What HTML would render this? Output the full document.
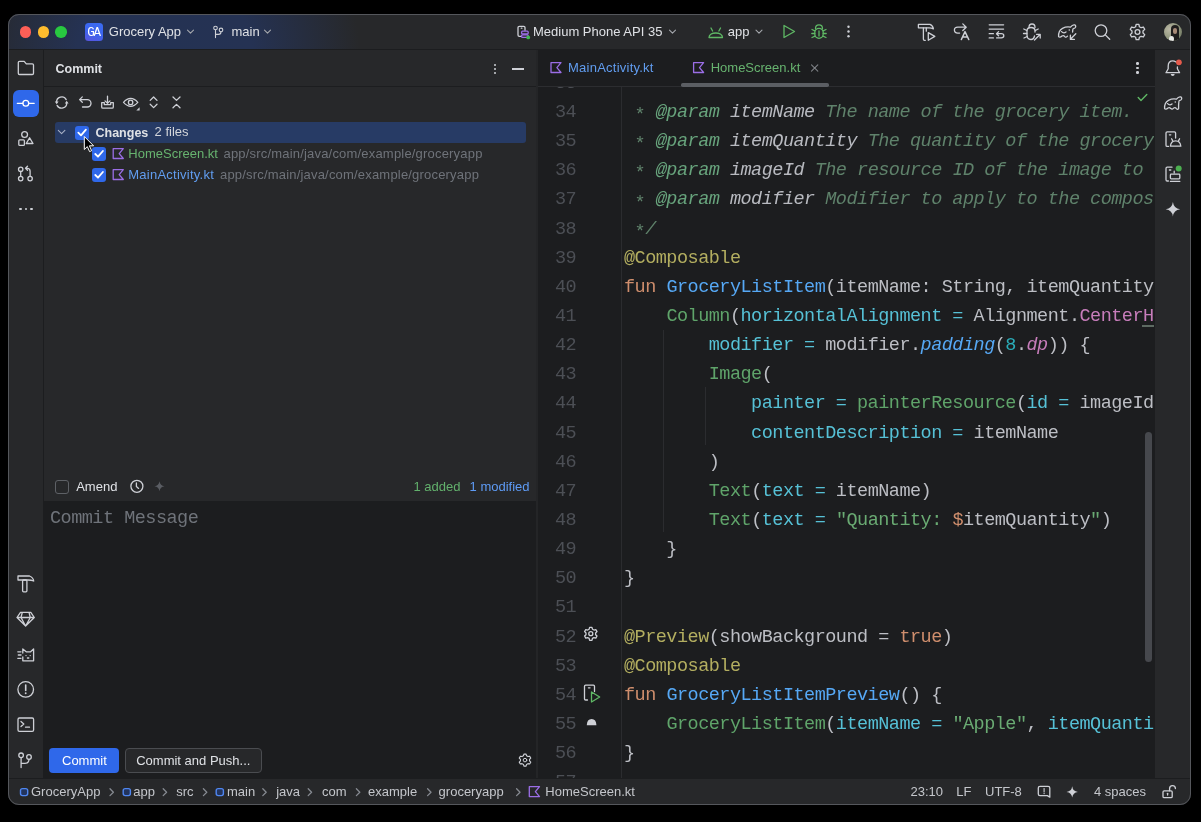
<!DOCTYPE html>
<html><head><meta charset="utf-8">
<style>
*{margin:0;padding:0;box-sizing:border-box}
html,body{width:1201px;height:822px;background:#000;overflow:hidden}
body{font-family:"Liberation Sans",sans-serif;font-size:13px;color:#dfe1e5;position:relative}
.a{position:absolute}
#win{position:absolute;left:8px;top:14px;width:1183px;height:791px;border-radius:11px;overflow:hidden;background:#27282a}
#pg{position:absolute;left:-8px;top:-14px;width:1201px;height:822px;will-change:transform}
#border{position:absolute;left:8px;top:14px;width:1183px;height:791px;border-radius:11px;border:1px solid #55575c;pointer-events:none}
.t{position:absolute;white-space:pre;line-height:16px}
.b{font-weight:bold}
.m{font-family:"Liberation Mono",monospace}
svg.i{position:absolute;overflow:visible}
svg.i *{fill:none;stroke:#ced0d6;stroke-width:1.3;stroke-linecap:round;stroke-linejoin:round}
svg.i .f{fill:#ced0d6;stroke:none}
svg.i .g{stroke:#5fb865}
svg.i .d{stroke:#868a91}
svg.i .p{stroke:#9b6ee6}
.chk{position:absolute;width:14px;height:14px;border-radius:3px;background:#2f68ea}
.code{position:absolute;left:624px;top:0;font-family:"Liberation Mono",monospace;font-size:18.5px;letter-spacing:-0.51px;line-height:29.145px;white-space:pre;color:#bcbec4}
.ln{position:absolute;left:540px;width:38px;text-align:right;font-family:"Liberation Mono",monospace;font-size:18.5px;letter-spacing:-0.51px;line-height:29.145px;color:#4c4f55;white-space:pre}
.k{color:#cf8e6d}.fd{color:#56a8f5}.an{color:#b3ae60}.s{color:#6aab73}.n{color:#2aacb8}.na{color:#56c1d6}.cf{color:#5fa46a}.pu{color:#c77dbb}
.c{color:#5f826b;font-style:italic}.tg{color:#67a37c;font-style:italic}.tv{color:#b8bac0;font-style:italic}.it{font-style:italic}
</style></head>
<body>
<div id="win"><div id="pg">
  <!-- TITLE BAR -->
  <div class="a" style="left:0;top:14px;width:1201px;height:35px;background:radial-gradient(ellipse 195px 170px at 165px 40px,#243253 0%,#253253 45%,rgba(39,40,42,0) 100%),#27282a"></div>
  <div class="a" style="left:0;top:49px;width:1201px;height:1px;background:#1c1d1f"></div>
  <div class="a" style="left:19.85px;top:26px;width:11.5px;height:11.5px;border-radius:50%;background:#fe5f57"></div>
  <div class="a" style="left:37.65px;top:26px;width:11.5px;height:11.5px;border-radius:50%;background:#febc2e"></div>
  <div class="a" style="left:55.45px;top:26px;width:11.5px;height:11.5px;border-radius:50%;background:#28c840"></div>

  <!-- LEFT STRIP -->
  <div class="a" style="left:0;top:50px;width:43px;height:728px;background:#27282a"></div>
  <div class="a" style="left:43px;top:50px;width:1px;height:728px;background:#1c1d1f"></div>

  <!-- COMMIT PANEL -->
  <div class="a" style="left:44px;top:50px;width:492px;height:451px;background:#27282a"></div>
  <div class="a" style="left:44px;top:86px;width:492px;height:1px;background:#1c1d1f"></div>
  <div class="a" style="left:44px;top:501px;width:492px;height:277px;background:#1c1d1f"></div>
  <div class="a" style="left:536px;top:50px;width:2px;height:728px;background:#242527"></div>

  <!-- EDITOR -->
  <div class="a" style="left:538px;top:50px;width:617px;height:728px;background:#1c1d1f"></div>
  <div class="a" style="left:538px;top:85.5px;width:617px;height:1px;background:#2c2d30"></div>

  <!-- RIGHT STRIP -->
  <div class="a" style="left:1155px;top:50px;width:46px;height:728px;background:#27282a"></div>

  <!-- STATUS BAR -->
  <div class="a" style="left:0;top:778px;width:1201px;height:1px;background:#1c1d1f"></div>
  <div class="a" style="left:0;top:779px;width:1201px;height:30px;background:#27282a"></div>
  <!-- title content -->
  <div class="a" style="left:85.3px;top:22.9px;width:18px;height:18px;border-radius:3.5px;background:linear-gradient(200deg,#3a6cf2 0%,#3d64ee 55%,#5a55de 100%)"></div>
  <div class="t m" style="left:85px;top:25.4px;width:17px;text-align:center;font-size:12.5px;letter-spacing:-1.2px;color:#fff">GA</div>
  <div class="t" style="left:108.8px;top:23.8px;color:#dfe1e5">Grocery App</div>
  <svg class="i" style="left:0;top:0" width="1" height="1"><path d="M187.5 30.2 L190.5 33.2 L193.5 30.2" style="stroke:#a4a7ac;stroke-width:1.1"/></svg>
  <svg class="i" style="left:0;top:0" width="1" height="1">
    <circle cx="215.5" cy="28" r="1.8" style="stroke-width:1.1"/><circle cx="221" cy="29.9" r="1.8" style="stroke-width:1.1"/>
    <path d="M215.5 29.8 V37.6 M221 31.7 Q221 34.4 218.5 34.4 H215.5" style="stroke-width:1.1"/>
  </svg>
  <div class="t" style="left:231.5px;top:23.8px">main</div>
  <svg class="i" style="left:0;top:0" width="1" height="1"><path d="M264.5 30.2 L267.5 33.2 L270.5 30.2" style="stroke:#a4a7ac;stroke-width:1.1"/></svg>

  <!-- device -->
  <svg class="i" style="left:0;top:0" width="1" height="1">
    <path d="M521 36.3 H519.3 Q518 36.3 518 35 V27.6 Q518 26.3 519.3 26.3 H523.8 Q525 26.3 525 27.6 V30.3" />
    <path d="M521.3 28.2 h0.6" />
    <rect x="521.6" y="31.2" width="6.6" height="2.8" rx="1" class="p"/>
    <rect x="521.6" y="34.8" width="6.6" height="2.6" rx="1" class="p"/>
    <circle class="f" cx="528.2" cy="37.4" r="1.9" style="fill:#3fb950"/>
  </svg>
  <div class="t" style="left:533px;top:23.6px">Medium Phone API 35</div>
  <svg class="i" style="left:0;top:0" width="1" height="1"><path d="M669.5 30.2 L672.5 33.2 L675.5 30.2" style="stroke:#a4a7ac;stroke-width:1.1"/></svg>
  <!-- android -->
  <svg class="i" style="left:0;top:0" width="1" height="1" >
    <path class="g" d="M709 37.5 C709 31.5 722.5 31.5 722.5 37.5 Z M711 28 L712.6 31 M720.5 28 L718.9 31"/>
  </svg>
  <div class="t" style="left:727.8px;top:23.6px">app</div>
  <svg class="i" style="left:0;top:0" width="1" height="1"><path d="M756 30.2 L759 33.2 L762 30.2" style="stroke:#a4a7ac;stroke-width:1.1"/></svg>
  <!-- run -->
  <svg class="i" style="left:0;top:0" width="1" height="1"><path class="g" style="stroke-width:1.3" d="M784 25.5 L794.5 31.5 L784 37.5 Z"/></svg>
  <!-- debug -->
  <svg class="i" style="left:0;top:0" width="1" height="1">
    <g>
    <path class="g" d="M815.5 28.5 Q815.5 24.8 819 24.8 Q822.5 24.8 822.5 28.5"/>
    <rect class="g" x="814.8" y="28.3" width="8.4" height="10" rx="4.2"/>
    <path class="g" d="M812 29.5 L814.8 30.8 M826 29.5 L823.2 30.8 M811.8 33.5 H814.8 M826.2 33.5 H823.2 M812 37.5 L815 36.2 M826 37.5 L823 36.2 M819 31 V36"/>
    </g>
  </svg>
  <!-- kebab -->
  <svg class="i" style="left:0;top:0" width="1" height="1">
    <circle class="f" cx="848.5" cy="26.8" r="1.2"/><circle class="f" cx="848.5" cy="31.5" r="1.2"/><circle class="f" cx="848.5" cy="36.2" r="1.2"/>
  </svg>

  <!-- right toolbar icons -->
  <svg class="i" style="left:0;top:0" width="1" height="1">
    <!-- hammer+play -->
    <path d="M918.4 24.4 H930 Q932.9 25.6 933.4 28.9 Q931.6 27.8 929 27.8 H918.4 Z"/>
    <path d="M923.4 28 V39.2 Q923.4 40.3 924.5 40.3 H925.3 M926.3 28 V31.2"/>
    <path d="M928.3 32.6 L934.8 36.4 L928.3 40.2 Z"/>
    <!-- translate -->
    <path d="M959.6 33.1 H957.8 Q954.4 33.1 954.4 30.1 Q954.4 27.2 957.8 27.2 H966.2 M962.8 23.9 L966.2 27.2 L962.8 30.5"/>
    <path d="M961.3 39.6 L965 31.6 L968.8 39.6 M962.6 37 H967.5" style="stroke-width:1.45"/>
    <!-- list -->
    <path d="M989.2 24.8 H1003.6 M989.2 29.1 H1003.6 M989.2 33.7 H993.4 M989.2 37.9 H993.4"/>
    <path d="M996.6 37.9 H1001.3 Q1003.8 37.9 1003.8 35.8 Q1003.8 33.7 1001.3 33.7 H996.6 M998.6 31.6 L996.5 33.7 L998.6 35.8"/>
    <!-- bug arrow -->
    <path d="M1029 27.5 Q1029 24 1032 24 Q1035 24 1035 27.5"/>
    <path d="M1034.5 36 Q1033.8 39.5 1031 39.5 Q1027 39.5 1027 35 V30.8 Q1027 27.5 1031 27.5 Q1035 27.5 1035 30.8 V32"/>
    <path d="M1023.8 29 L1026.8 30.5 M1023.5 33.5 H1026.8 M1024 38 L1027.2 36.5 M1038.2 29 L1035.3 30.5"/>
    <path d="M1034.5 40 L1040 34.5 M1036.5 34.3 H1040.2 V38"/>
    <!-- elephant -->
    <path d="M1058.6 36.6 Q1058.2 30.5 1062.5 28.3 Q1066.5 26.3 1070.5 27.2 Q1072.6 24.4 1074.6 24.9 Q1076.3 25.6 1075.4 27.5 Q1074.9 28.4 1073.8 28.3 M1073 29 Q1072.6 30.5 1072.6 32 M1058.6 36.6 Q1060 38 1062 36 Q1063.6 35 1064.8 36.6 Q1066 38 1067.5 36.2"/>
    <path d="M1061.6 31.6 Q1063.6 33.8 1066 32"/>
    <circle class="f" cx="1069.3" cy="30" r="0.8"/>
    <path d="M1075.8 33.8 L1070.4 39.2 M1070.4 35.2 V39.4 H1074.4"/>
    <!-- search -->
    <circle cx="1101" cy="30.6" r="5.8"/>
    <path d="M1105.3 34.9 L1109.7 39.3"/>
    <!-- gear -->
    <path d="M1136.14 24.42 L1138.86 24.42 L1139.40 26.73 L1141.11 27.72 L1143.38 27.03 L1144.74 29.39 L1143.01 31.01 L1143.01 32.99 L1144.74 34.61 L1143.38 36.97 L1141.11 36.28 L1139.40 37.27 L1138.86 39.58 L1136.14 39.58 L1135.60 37.27 L1133.89 36.28 L1131.62 36.97 L1130.26 34.61 L1131.99 32.99 L1131.99 31.01 L1130.26 29.39 L1131.62 27.03 L1133.89 27.72 L1135.60 26.73 Z"/>
    <circle cx="1137.5" cy="32" r="2.4"/>
  </svg>
  <!-- avatar -->
  <div class="a" style="left:1163.5px;top:22.8px;width:18.5px;height:18.5px;border-radius:50%;overflow:hidden;background:radial-gradient(circle at 30% 35%,#b9b7a4,#8f957c 55%,#5d6552)">
    <div class="a" style="left:7px;top:2px;width:8px;height:17px;border-radius:4px 4px 1px 1px;background:#1f1d1c"></div>
    <div class="a" style="left:9.5px;top:5px;width:4px;height:6px;border-radius:2px;background:#a88a76"></div>
    <div class="a" style="left:5px;top:13px;width:5px;height:6px;border-radius:50%;background:#e9e9e6"></div>
  </div>
  <!-- left strip icons -->
  <div class="a" style="left:12.5px;top:90px;width:26.5px;height:26.5px;border-radius:6px;background:#2f68ea"></div>
  <svg class="i" style="left:0;top:0" width="1" height="1">
    <!-- folder -->
    <path d="M18.3 62.5 Q18.3 61.3 19.5 61.3 H24.2 L26.3 63.8 H32.3 Q33.5 63.8 33.5 65 V73.3 Q33.5 74.5 32.3 74.5 H19.5 Q18.3 74.5 18.3 73.3 Z"/>
    <!-- commit -->
    <path d="M17.3 103.3 H22.8 M28.8 103.3 H34.2" style="stroke:#fff;stroke-width:1.3"/>
    <circle cx="25.8" cy="103.3" r="2.9" style="stroke:#fff;stroke-width:1.3"/>
    <!-- structure -->
    <circle cx="24.6" cy="134.5" r="2.9"/>
    <rect x="18.8" y="139.8" width="5.6" height="5.6" rx="1"/>
    <path d="M29.6 137.8 L33 143.5 H26.2 Z"/>
    <!-- PR -->
    <circle cx="20.7" cy="169.3" r="2.2"/><circle cx="20.7" cy="178.6" r="2.2"/><circle cx="30.1" cy="178.6" r="2.2"/>
    <path d="M20.7 171.5 V176.4 M30.1 176.4 V171.2 Q30.1 168.3 27.3 168.3 H25.8 M27.5 166.3 L25.5 168.3 L27.5 170.3"/>
    <!-- hammer -->
    <path d="M18 576 H29.5 Q33.2 577.5 33.7 581 Q31.5 580 28 580 H18 Z"/>
    <rect x="22.6" y="580" width="4.3" height="11.8" rx="1"/>
    <!-- gem -->
    <path d="M20.5 612.4 H30.8 L34.3 617.5 L25.6 626 L17 617.5 Z M17 617.5 H34.3 M22.3 612.4 L21 617.5 L25.6 626 L30.3 617.5 L29 612.4"/>
    <!-- cat -->
    <path d="M22.8 653 V649 L26.2 651.8 H30.6 L33.6 649 V660.8 H22.8 V657"/>
    <path d="M17.8 651.8 H21 M18.3 655 H21 M17.8 658.3 H21"/>
    <circle class="f" cx="26" cy="655.6" r="0.7"/><circle class="f" cx="30.2" cy="655.6" r="0.7"/><path d="M27.4 658 H28.8"/>
    <!-- exclamation -->
    <circle cx="25.7" cy="689.4" r="7.8"/>
    <path d="M25.7 685 V690.5" style="stroke-width:1.6"/>
    <circle class="f" cx="25.7" cy="693.3" r="0.95"/>
    <!-- terminal -->
    <rect x="18" y="718" width="15.6" height="13.4" rx="1.4"/>
    <path d="M21 721.5 L23.8 724 L21 726.5 M25.5 727.2 H29.5"/>
    <!-- git -->
    <circle cx="21.1" cy="755.3" r="2.3"/><circle cx="29" cy="757" r="2.3"/>
    <path d="M21.1 757.6 V767.6 M29 759.3 Q29 763.3 25 763.3 H21.1"/>
  </svg>
  <div class="a" style="left:19px;top:207.8px;width:2.6px;height:2.6px;border-radius:50%;background:#ced0d6"></div>
  <div class="a" style="left:24.6px;top:207.8px;width:2.6px;height:2.6px;border-radius:50%;background:#ced0d6"></div>
  <div class="a" style="left:30.2px;top:207.8px;width:2.6px;height:2.6px;border-radius:50%;background:#ced0d6"></div>
  <!-- commit header -->
  <div class="t b" style="left:55.5px;top:60.8px;font-size:12.5px;color:#dfe1e5">Commit</div>
  <div class="a" style="left:494px;top:63.5px;width:2px;height:2px;background:#ced0d6;border-radius:1px"></div>
  <div class="a" style="left:494px;top:68px;width:2px;height:2px;background:#ced0d6;border-radius:1px"></div>
  <div class="a" style="left:494px;top:72.3px;width:2px;height:2px;background:#ced0d6;border-radius:1px"></div>
  <div class="a" style="left:512.2px;top:68.2px;width:11.6px;height:1.5px;background:#ced0d6"></div>
  <svg class="i" style="left:0;top:0" width="1" height="1">
    <!-- refresh -->
    <path d="M56.6 102.3 A5.1 5.1 0 0 1 66.2 99.6 M66.7 102.7 A5.1 5.1 0 0 1 57.1 105.4"/>
    <path class="f" d="M54.8 101.6 H58.6 L56.7 104.2 Z M64.8 103.4 H68.6 L66.7 100.8 Z"/>
    <!-- undo -->
    <path d="M79.8 99.6 H87.3 A3.7 3.7 0 0 1 87.3 107 H82.5 M82.3 96.9 L79.6 99.6 L82.3 102.3"/>
    <!-- download -->
    <path d="M107.5 96.2 V103.3 M105 100.9 L107.5 103.4 L110 100.9"/>
    <path d="M101.7 102.6 H104.3 V104.6 H110.7 V102.6 H113.3 V107 Q113.3 108.2 112.1 108.2 H102.9 Q101.7 108.2 101.7 107 Z"/>
    <!-- eye -->
    <path d="M123.5 102.4 Q130.7 94.5 137.8 102.4 Q130.7 110.3 123.5 102.4 Z"/>
    <circle cx="130.6" cy="102.4" r="2.2"/>
    <path class="f" d="M139.6 107.3 V110.6 H136.3 Z"/>
    <!-- expand -->
    <path d="M150.2 100.4 L153.6 97 L157 100.4 M150.2 104.2 L153.6 107.6 L157 104.2"/>
    <!-- collapse -->
    <path d="M173 97 L176.5 100.4 L180 97 M173 107.8 L176.5 104.4 L180 107.8"/>
  </svg>

  <!-- tree -->
  <div class="a" style="left:55px;top:122px;width:471px;height:20.5px;border-radius:3px;background:#273b65"></div>
  <svg class="i" style="left:0;top:0" width="1" height="1"><path d="M58.3 130.4 L61.6 133.7 L64.9 130.4" style="stroke:#a9b1c6;stroke-width:1.05"/></svg>
  <div class="chk" style="left:75px;top:125.5px"></div>
  <div class="t b" style="left:95.5px;top:124.6px;font-size:12.5px">Changes</div>
  <div class="t" style="left:154.6px;top:124.4px;color:#d3d5da">2 files</div>

  <div class="chk" style="left:92px;top:147px"></div>
  <div class="chk" style="left:92px;top:168px"></div>
  <svg class="i" style="left:0;top:0" width="1" height="1">
    <path d="M78.3 132.6 L81 135.3 L85.9 129.6" style="stroke:#fff;stroke-width:1.8"/>
    <path d="M95.3 154 L98 156.7 L102.9 151" style="stroke:#fff;stroke-width:1.8"/>
    <path d="M95.3 175 L98 177.7 L102.9 172" style="stroke:#fff;stroke-width:1.8"/>
  </svg>
  <svg class="i" style="left:0;top:0" width="1" height="1">
    <path class="p" d="M113.2 148.7 H123.3 L119.2 153.6 L123.3 158.5 H113.2 Z"/>
    <path class="p" d="M113.2 169.7 H123.3 L119.2 174.6 L123.3 179.5 H113.2 Z"/>
  </svg>
  <div class="t" style="left:128.3px;top:145.8px;color:#67b36f">HomeScreen.kt</div>
  <div class="t" style="left:223.5px;top:145.8px;color:#6f737a;letter-spacing:0.19px">app/src/main/java/com/example/groceryapp</div>
  <div class="t" style="left:128.3px;top:166.8px;color:#619df0;letter-spacing:0.24px">MainActivity.kt</div>
  <div class="t" style="left:220px;top:166.8px;color:#6f737a;letter-spacing:0.19px">app/src/main/java/com/example/groceryapp</div>

  <!-- cursor -->
  <svg class="a" style="left:0;top:0;overflow:visible" width="1" height="1">
    <path d="M84.3 136.5 V149.5 L87.3 146.6 L89.6 151.6 L91.6 150.7 L89.4 145.8 H93.6 Z" fill="#000" stroke="#fff" stroke-width="1" stroke-linejoin="round"/>
  </svg>

  <!-- amend row -->
  <div class="a" style="left:55px;top:479.5px;width:14px;height:14px;border-radius:3px;border:1px solid #5e6166"></div>
  <div class="t" style="left:76.2px;top:478.6px">Amend</div>
  <svg class="i" style="left:0;top:0" width="1" height="1">
    <circle cx="136.9" cy="486.3" r="6"/>
    <path d="M136.4 483 V486.5 L138.6 488.4"/>
    <path class="f" style="fill:#5a5d63" d="M159.5 481.3 Q160.2 485.6 164.5 486.3 Q160.2 487 159.5 491.3 Q158.8 487 154.5 486.3 Q158.8 485.6 159.5 481.3 Z"/>
  </svg>
  <div class="t" style="left:413.4px;top:478.6px;color:#62b06c">1 added</div>
  <div class="t" style="left:469.6px;top:478.6px;color:#5e9bf5">1 modified</div>

  <!-- commit message -->
  <div class="t m" style="left:50px;top:503.6px;font-size:18.5px;letter-spacing:-0.51px;line-height:29.145px;color:#6f737a">Commit Message</div>

  <!-- buttons -->
  <div class="a" style="left:49.4px;top:748px;width:70px;height:24.6px;border-radius:4px;background:#2f68ea"></div>
  <div class="t" style="left:49.4px;top:752.6px;width:70px;text-align:center;color:#fff">Commit</div>
  <div class="a" style="left:124.6px;top:748px;width:137.4px;height:24.6px;border-radius:4px;border:1px solid #4a4c50;background:#27282a"></div>
  <div class="t" style="left:124.6px;top:752.6px;width:137.4px;text-align:center;color:#dfe1e5">Commit and Push...</div>
  <svg class="i" style="left:0;top:0" width="1" height="1">
    <path d="M523.92 754.10 L526.08 754.10 L526.56 755.77 L527.97 756.59 L529.66 756.16 L530.74 758.03 L529.53 759.29 L529.53 760.91 L530.74 762.17 L529.66 764.04 L527.97 763.61 L526.56 764.43 L526.08 766.10 L523.92 766.10 L523.44 764.43 L522.03 763.61 L520.34 764.04 L519.26 762.17 L520.47 760.91 L520.47 759.29 L519.26 758.03 L520.34 756.16 L522.03 756.59 L523.44 755.77 Z" style="stroke-width:1.1"/>
    <circle cx="525" cy="760.1" r="1.8" style="stroke-width:1"/>
  </svg>
  <!-- editor tabs -->
  <svg class="i" style="left:0;top:0" width="1" height="1">
    <path class="p" d="M551 62.7 H561 L556.9 67.6 L561 72.5 H551 Z"/>
    <path class="p" d="M693.6 62.7 H703.6 L699.5 67.6 L703.6 72.5 H693.6 Z"/>
    <path d="M811.5 64.8 L817.8 71.1 M817.8 64.8 L811.5 71.1" style="stroke:#7d8085;stroke-width:1.1"/>
  </svg>
  <div class="t" style="left:568px;top:60.3px;color:#619df0;letter-spacing:0.24px">MainActivity.kt</div>
  <div class="t" style="left:710.7px;top:60.3px;color:#67b36f">HomeScreen.kt</div>
  <div class="a" style="left:681px;top:83px;width:147.5px;height:3.5px;border-radius:1.75px;background:#5b5e63"></div>
  <div class="a" style="left:1136.2px;top:62.3px;width:2.4px;height:2.4px;background:#ced0d6;border-radius:50%"></div>
  <div class="a" style="left:1136.2px;top:67px;width:2.4px;height:2.4px;background:#ced0d6;border-radius:50%"></div>
  <div class="a" style="left:1136.2px;top:71.3px;width:2.4px;height:2.4px;background:#ced0d6;border-radius:50%"></div>
  <!-- editor code -->
  <div class="a" style="left:538px;top:87px;width:615.5px;height:691px;overflow:hidden">
   <div class="a" style="left:-538px;top:-87px;width:1201px;height:822px">
    <div class="a" style="left:663px;top:329.5px;width:1px;height:202.5px;background:#2b2c2f"></div>
    <div class="a" style="left:705px;top:387px;width:1px;height:58px;background:#2b2c2f"></div>
    <div class="a" style="left:621px;top:87px;width:1px;height:691px;background:#2b2c2f"></div>
    <div class="ln" style="width:36.2px;top:68.86px">33
34
35
36
37
38
39
40
41
42
43
44
45
46
47
48
49
50
51
52
53
54
55
56
57</div>
    <div class="code" style="top:68.86px">
<span class="c"> <span style="position:relative;top:3.2px;font-style:normal">*</span> </span><span class="tg">@param</span><span class="tv"> itemName</span><span class="c"> The name of the grocery item.</span>
<span class="c"> <span style="position:relative;top:3.2px;font-style:normal">*</span> </span><span class="tg">@param</span><span class="tv"> itemQuantity</span><span class="c"> The quantity of the grocery item.</span>
<span class="c"> <span style="position:relative;top:3.2px;font-style:normal">*</span> </span><span class="tg">@param</span><span class="tv"> imageId</span><span class="c"> The resource ID of the image to display.</span>
<span class="c"> <span style="position:relative;top:3.2px;font-style:normal">*</span> </span><span class="tg">@param</span><span class="tv"> modifier</span><span class="c"> Modifier to apply to the composable.</span>
<span class="c"> <span style="position:relative;top:3.2px;font-style:normal">*</span>/</span>
<span class="an">@Composable</span>
<span class="k">fun </span><span class="fd">GroceryListItem</span>(itemName: String, itemQuantity: Int, imageId: Int)
    <span class="cf">Column</span>(<span class="na">horizontalAlignment =</span> Alignment.<span class="pu">CenterHorizontally</span>,
        <span class="na">modifier =</span> modifier.<span class="fd it">padding</span>(<span class="n">8</span>.<span class="pu it">dp</span>)) {
        <span class="cf">Image</span>(
            <span class="na">painter =</span> <span class="cf">painterResource</span>(<span class="na">id =</span> imageId),
            <span class="na">contentDescription =</span> itemName
        )
        <span class="cf">Text</span>(<span class="na">text =</span> itemName)
        <span class="cf">Text</span>(<span class="na">text =</span> <span class="s">&quot;Quantity: </span><span class="k">$</span>itemQuantity<span class="s">&quot;</span>)
    }
}

<span class="an">@Preview</span>(showBackground = <span class="k">true</span>)
<span class="an">@Composable</span>
<span class="k">fun </span><span class="fd">GroceryListItemPreview</span>() {
    <span class="cf">GroceryListItem</span>(<span class="na">itemName =</span> <span class="s">&quot;Apple&quot;</span>, <span class="na">itemQuantity =</span> <span class="n">5</span>)
}
</div>
   </div>
  </div>
  <!-- gutter icons -->
  <svg class="i" style="left:0;top:0" width="1" height="1">
    <path d="M589.63 627.30 L591.97 627.30 L592.46 629.19 L593.96 630.06 L595.84 629.54 L597.01 631.56 L595.62 632.93 L595.62 634.67 L597.01 636.04 L595.84 638.06 L593.96 637.54 L592.46 638.41 L591.97 640.30 L589.63 640.30 L589.14 638.41 L587.64 637.54 L585.76 638.06 L584.59 636.04 L585.98 634.67 L585.98 632.93 L584.59 631.56 L585.76 629.54 L587.64 630.06 L589.14 629.19 Z"/>
    <circle cx="590.8" cy="633.7" r="2"/>
    <path d="M587.5 700 H585.6 Q584.5 700 584.5 698.9 V686.3 Q584.5 685.2 585.6 685.2 H593.4 Q594.5 685.2 594.5 686.3 V691.5"/>
    <path d="M588.4 687.8 H590"/>
    <path class="g" d="M591.5 692 L599.7 697 L591.5 702 Z"/>
    <path class="f" d="M586.8 725.2 Q587 719 591.6 719 Q596.2 719 596.4 725.2 Z"/>
  </svg>
  <!-- check + scrollbar -->
  <svg class="i" style="left:0;top:0" width="1" height="1"><path class="g" d="M1138.2 97.6 L1141 100.4 L1146.8 94.6" style="stroke-width:1.4"/></svg>
  <div class="a" style="left:1145.3px;top:432.3px;width:6.5px;height:230px;border-radius:3.5px;background:#46484d"></div>
  <div class="a" style="left:1142px;top:325px;width:12px;height:1.6px;background:#5d6a62"></div>
  <!-- right strip icons -->
  <svg class="i" style="left:0;top:0" width="1" height="1">
    <!-- bell -->
    <path d="M1175.6 61.8 Q1174.3 60.8 1172.8 60.8 Q1168.2 60.8 1168.2 66 V68.8 L1166 72.7 H1179.6 L1177.4 68.8 V66.8"/>
    <path class="f" d="M1170.7 74 H1174.7 Q1174.5 75.9 1172.7 75.9 Q1170.9 75.9 1170.7 74 Z"/>
    <circle class="f" cx="1178.9" cy="62.3" r="2.9" style="fill:#e55b4c"/>
    <!-- elephant -->
    <path d="M1164.6 108.6 Q1164.2 102.5 1168.5 100.3 Q1172.5 98.3 1176.5 99.2 Q1178.6 96.4 1180.6 96.9 Q1182.3 97.6 1181.4 99.5 Q1180.9 100.4 1179.8 100.3 M1179 101 Q1178.6 103.5 1178.6 106 V108.6 Q1177.6 110 1176.4 108.6 Q1175.3 107 1173.7 108 Q1172.3 110 1170.8 108.6 Q1169.6 107 1168 108 Q1166 110 1164.6 108.6"/>
    <path d="M1167.6 103.6 Q1169.6 105.8 1172 104"/>
    <circle class="f" cx="1175.3" cy="102" r="0.8"/>
    <!-- phone android -->
    <path d="M1168.5 146.4 H1167.2 Q1166 146.4 1166 145.2 V133.1 Q1166 131.9 1167.2 131.9 H1174.4 Q1175.6 131.9 1175.6 133.1 V138"/>
    <path d="M1169.4 134.8 H1170.8"/>
    <path d="M1170.4 146.2 Q1170.8 140.8 1175.6 140.8 Q1180.4 140.8 1180.8 146.2 Z M1172.6 140.6 L1171.6 138.8 M1178.6 140.6 L1179.6 138.8"/>
    <!-- device manager -->
    <path d="M1168.4 181 H1167.2 Q1166 181 1166 179.8 V168.4 Q1166 167.2 1167.2 167.2 H1172"/>
    <path d="M1169.4 170 H1170.8 M1174.2 171.2 V173"/>
    <rect x="1170.4" y="174.2" width="9.4" height="4.6" rx="0.8"/>
    <path d="M1170.4 181.4 H1179.8"/>
    <circle class="f" cx="1178.7" cy="168.4" r="3" style="fill:#4caf50"/>
    <!-- gemini star -->
    <path class="f" d="M1172.9 202 Q1173.7 208.4 1180.1 209.2 Q1173.7 210 1172.9 216.4 Q1172.1 210 1165.7 209.2 Q1172.1 208.4 1172.9 202 Z"/>
  </svg>
  <!-- status bar -->
  <svg class="i" style="left:0;top:0" width="1" height="1">
    <rect x="20.5" y="788.6" width="7.2" height="7" rx="2" style="stroke:#4f86f0;stroke-width:1.4;fill:#22345e"/>
    <rect x="123.2" y="788.6" width="7.2" height="7" rx="2" style="stroke:#4f86f0;stroke-width:1.4;fill:#22345e"/>
    <rect x="216.2" y="788.6" width="7.2" height="7" rx="2" style="stroke:#4f86f0;stroke-width:1.4;fill:#22345e"/>
    <g style="stroke:#8c8f94">
    <path class="d" d="M110 788.8 L113.4 792.2 L110 795.6"/>
    <path class="d" d="M163.2 788.8 L166.6 792.2 L163.2 795.6"/>
    <path class="d" d="M203.4 788.8 L206.8 792.2 L203.4 795.6"/>
    <path class="d" d="M262.8 788.8 L266.2 792.2 L262.8 795.6"/>
    <path class="d" d="M308.2 788.8 L311.6 792.2 L308.2 795.6"/>
    <path class="d" d="M356.4 788.8 L359.8 792.2 L356.4 795.6"/>
    <path class="d" d="M427.6 788.8 L431 792.2 L427.6 795.6"/>
    <path class="d" d="M516.6 788.8 L520 792.2 L516.6 795.6"/>
    </g>
    <path class="p" d="M529.3 786.6 H539.5 L535.4 791.6 L539.5 796.6 H529.3 Z"/>
    <!-- comment icon -->
    <path d="M1040 786.4 H1048.1 Q1049.8 786.4 1049.8 788.1 V797.2 L1047.4 795.6 H1040 Q1038.3 795.6 1038.3 793.9 V788.1 Q1038.3 786.4 1040 786.4 Z"/>
    <path d="M1044.1 788.6 V792" style="stroke-width:1.1"/>
    <circle class="f" cx="1044.1" cy="793.6" r="0.7"/>
    <!-- star -->
    <path class="f" d="M1072.2 786.2 Q1072.8 791.3 1077.9 791.9 Q1072.8 792.5 1072.2 797.6 Q1071.6 792.5 1066.5 791.9 Q1071.6 791.3 1072.2 786.2 Z"/>
    <!-- lock -->
    <rect x="1163" y="790.8" width="9.2" height="6.8" rx="1.2"/>
    <path d="M1169.6 790.8 V788.5 Q1169.6 785.6 1172.5 785.6 Q1175.4 785.6 1175.4 788.5"/>
    <path d="M1167.6 793.3 V795" style="stroke-width:1.3"/>
  </svg>
  <div class="t" style="left:31px;top:784px;color:#c4c6cb">GroceryApp</div>
  <div class="t" style="left:133.3px;top:784px;color:#c4c6cb">app</div>
  <div class="t" style="left:176.2px;top:784px;color:#c4c6cb">src</div>
  <div class="t" style="left:227px;top:784px;color:#c4c6cb">main</div>
  <div class="t" style="left:276.2px;top:784px;color:#c4c6cb">java</div>
  <div class="t" style="left:322px;top:784px;color:#c4c6cb">com</div>
  <div class="t" style="left:368px;top:784px;color:#c4c6cb">example</div>
  <div class="t" style="left:438.6px;top:784px;color:#c4c6cb">groceryapp</div>
  <div class="t" style="left:545.3px;top:784px;color:#c4c6cb">HomeScreen.kt</div>
  <div class="t" style="left:910.5px;top:784px;color:#c4c6cb">23:10</div>
  <div class="t" style="left:956.3px;top:784px;color:#c4c6cb">LF</div>
  <div class="t" style="left:985px;top:784px;color:#c4c6cb">UTF-8</div>
  <div class="t" style="left:1094px;top:784px;color:#c4c6cb">4 spaces</div>
</div></div>
<div id="border"></div>
</body></html>
